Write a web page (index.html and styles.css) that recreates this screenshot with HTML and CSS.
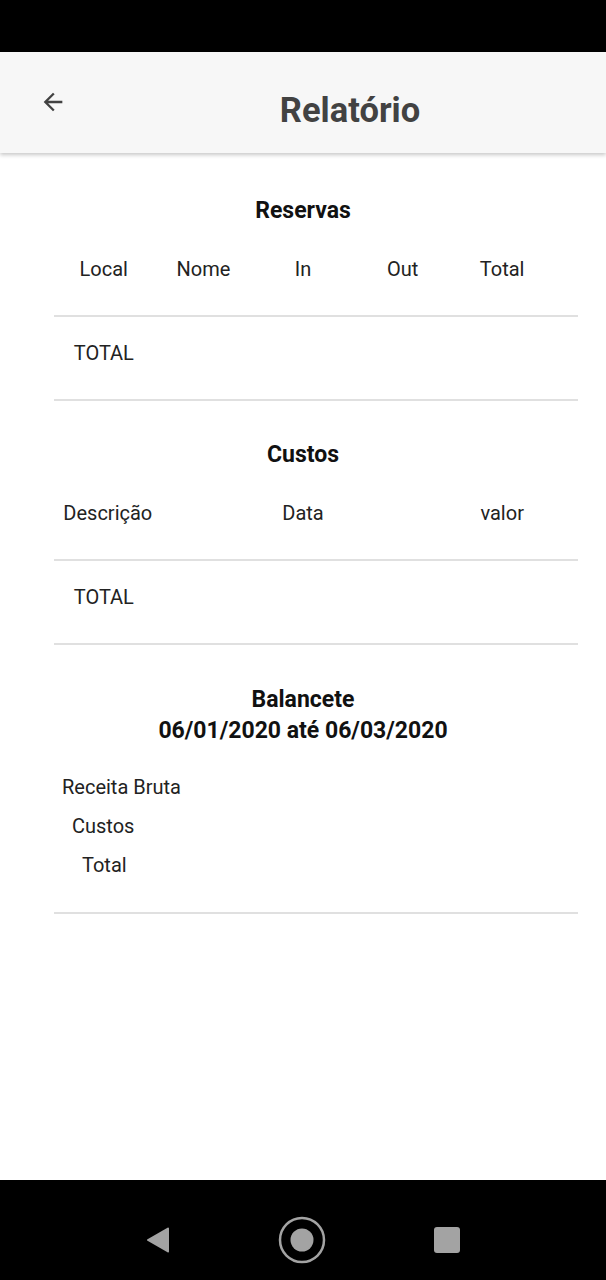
FILE: index.html
```html
<!DOCTYPE html>
<html lang="pt">
<head>
<meta charset="utf-8">
<link rel="stylesheet" href="styles.css">
</head>
<body>
<div class="screen">
  <div class="statusbar"></div>
  <header class="appbar">
    <svg class="back" width="28" height="28" viewBox="0 0 24 24"><path d="M20 11H7.83l5.59-5.59L12 4l-8 8 8 8 1.41-1.41L7.83 13H20v-2z" fill="#424242"/></svg>
    <h1 class="title">Relatório</h1>
  </header>
  <main class="content">
    <section class="section">
      <h2 class="sec-title first">Reservas</h2>
      <div class="grid head">
        <span>Local</span><span>Nome</span><span>In</span><span>Out</span><span>Total</span>
      </div>
      <div class="divider"></div>
      <div class="grid total">
        <span>TOTAL</span>
      </div>
      <div class="divider"></div>
    </section>
    <section class="section">
      <h2 class="sec-title">Custos</h2>
      <div class="grid head">
        <span class="desc">Descrição</span><span class="c3">Data</span><span class="c5">valor</span>
      </div>
      <div class="divider"></div>
      <div class="grid total">
        <span>TOTAL</span>
      </div>
      <div class="divider"></div>
    </section>
    <section class="section">
      <h2 class="sec-title two">Balancete<br>06/01/2020 até 06/03/2020</h2>
      <div class="bal">
        <div class="bal-row r1">Receita Bruta</div>
        <div class="bal-row r2">Custos</div>
        <div class="bal-row r3">Total</div>
      </div>
      <div class="divider"></div>
    </section>
  </main>
  <nav class="navbar">
    <svg width="26" height="28" viewBox="0 0 26 28"><path d="M23 2.5 L3 14 L23 25.5 Z" fill="#a3a3a3" stroke="#a3a3a3" stroke-width="2" stroke-linejoin="round"/></svg>
    <svg width="50" height="50" viewBox="0 0 50 50"><circle cx="25" cy="25" r="22" fill="none" stroke="#a3a3a3" stroke-width="2.5"/><circle cx="25" cy="25" r="11.5" fill="#a3a3a3"/></svg>
    <svg width="28" height="28" viewBox="0 0 28 28"><rect x="1" y="1" width="26" height="26" rx="3" fill="#a3a3a3"/></svg>
  </nav>
</div>
</body>
</html>
```

FILE: styles.css
```css
* { box-sizing: border-box; }
html, body { margin: 0; padding: 0; }
body {
  font-family: Roboto, "Liberation Sans", Arial, sans-serif;
  background: #fff;
  color: #212121;
}
.screen {
  width: 606px;
  height: 1280px;
  display: flex;
  flex-direction: column;
  overflow: hidden;
}
.statusbar {
  height: 52px;
  background: #000;
  flex: none;
}
.appbar {
  height: 101px;
  flex: none;
  background: #f7f7f7;
  box-shadow: 0 2px 4px rgba(0,0,0,0.22);
  display: flex;
  align-items: center;
  position: relative;
  z-index: 1;
}
.back {
  position: absolute;
  left: 39px;
  top: 36px;
}
.title {
  margin: 0;
  width: 100%;
  text-align: center;
  padding-left: 94px;
  font-size: 34.5px;
  font-weight: 700;
  color: #424242;
  line-height: 1;
  padding-top: 16px;
}
.content {
  flex: 1;
  padding: 0 28px 0 54px;
}
.section {
  display: flex;
  flex-direction: column;
}
.sec-title {
  margin: 0;
  width: 498px;
  text-align: center;
  font-size: 23px;
  font-weight: 700;
  color: #111;
  line-height: 30px;
  padding-top: 39px;
  padding-bottom: 12px;
}
.sec-title.first { padding-top: 43px; }
.sec-title.two { line-height: 31px; padding-top: 39px; padding-bottom: 29px; }
.grid {
  display: grid;
  grid-template-columns: repeat(5, 99.6px);
  font-size: 20px;
  line-height: 24px;
  color: #222;
}
.grid span { text-align: center; white-space: nowrap; }
.grid.head { padding-top: 19px; padding-bottom: 34px; }
.grid.total { padding-top: 24px; padding-bottom: 34px; }
.desc { position: relative; left: 4px; }
.c3 { grid-column: 3; }
.c5 { grid-column: 5; }
.divider {
  height: 2px;
  background: #e0e0e0;
  width: 524px;
}
.bal {
  display: flex;
  flex-direction: column;
  gap: 15px;
  font-size: 20px;
  line-height: 24px;
  color: #222;
  padding-bottom: 35px;
}
.r1 { padding-left: 8px; }
.r2 { padding-left: 18px; }
.r3 { padding-left: 28px; }
.navbar {
  height: 100px;
  flex: none;
  background: #000;
  display: flex;
  align-items: center;
  justify-content: space-between;
  padding: 20px 145px 0 145px;
}
```
